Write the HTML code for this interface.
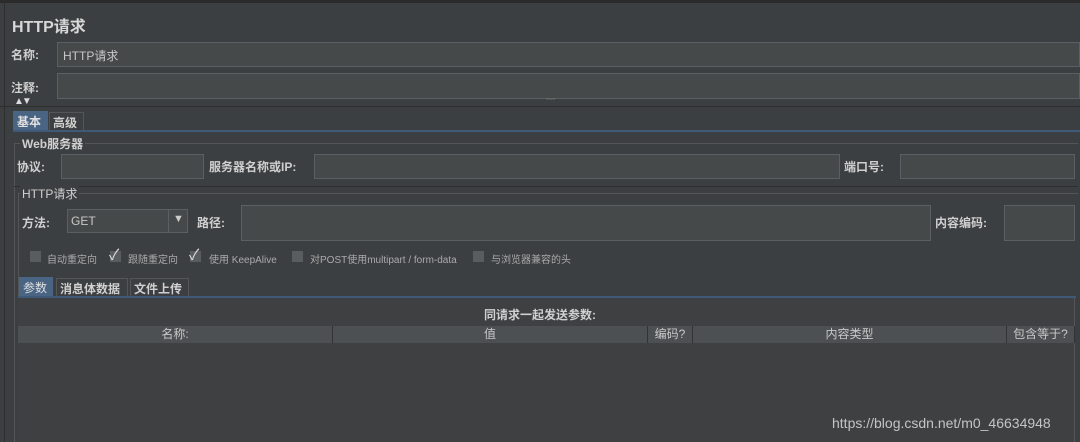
<!DOCTYPE html>
<html><head><meta charset="utf-8"><style>
*{margin:0;padding:0;box-sizing:border-box}
body{width:1080px;height:442px;background:#3c3f41;overflow:hidden;position:relative;font-family:"Liberation Sans","Noto Sans CJK SC",sans-serif;color:#c8c8c8;font-size:12px}
.a{position:absolute;white-space:nowrap}
.in{position:absolute;background:#45494a;border:1px solid #5c5f61}
.lb{position:absolute;font-weight:bold;color:#d0d0d0;font-size:12px;white-space:nowrap}
.cb{position:absolute;width:11px;height:11px;background:#5a5d5f;top:251px}
.ck{position:absolute;top:244px;font-size:15px;color:#ddd}
.cl{position:absolute;top:251px;font-size:10px;color:#aaa;white-space:nowrap}
.tab{position:absolute;height:20px;border:1px solid #555;background:#3c3f41;font-weight:bold;font-size:12px;padding:1px 3px;color:#d0d0d0}
.th{position:absolute;top:326px;height:17px;background:#4c5052;border-right:1px solid #333;text-align:center;font-size:12px;line-height:17px;color:#c8c8c8}
</style></head><body>
<div class="a" style="left:0;top:0;width:1080px;height:3px;background:#2b2b2b"></div>
<div class="a" style="left:4px;top:0;width:1px;height:442px;background:#2e2e2e"></div>
<div class="a" style="left:12px;top:13px;font-size:16px;font-weight:bold;color:#d8d8d8">HTTP请求</div>
<div class="lb" style="left:11px;top:46px">名称:</div>
<div class="in" style="left:57px;top:42px;width:1023px;height:25px"></div>
<div class="a" style="left:63px;top:47px;color:#c8c8c8">HTTP请求</div>
<div class="lb" style="left:11px;top:79px">注释:</div>
<div class="in" style="left:57px;top:73px;width:1023px;height:26px"></div>
<div class="a" style="left:14px;top:96px;font-size:10px;color:#ddd;letter-spacing:-2px">▲▼</div>
<div class="a" style="left:0;top:106px;width:1080px;height:1px;background:#2e2e2e"></div>
<div class="a" style="left:546px;top:99px;font-size:7px;color:#888">ˇˇˇˇ</div>
<div class="tab" style="left:13px;top:111px;width:35px;background:#4a6484;border-color:#4a6484;color:#e0e0e0">基本</div>
<div class="tab" style="left:49px;top:112px;width:35px">高级</div>
<div class="a" style="left:13px;top:130px;width:1067px;height:2px;background:#3f5a78"></div>
<div class="a" style="left:14px;top:143px;width:1064px;height:1px;background:#555"></div>
<div class="a" style="left:14px;top:143px;width:1px;height:299px;background:#555"></div>
<div class="lb" style="left:20px;top:135px;background:#3c3f41;padding:0 2px">Web服务器</div>
<div class="lb" style="left:17px;top:158px">协议:</div>
<div class="in" style="left:61px;top:154px;width:143px;height:25px"></div>
<div class="lb" style="left:209px;top:158px">服务器名称或IP:</div>
<div class="in" style="left:314px;top:154px;width:526px;height:25px"></div>
<div class="lb" style="left:844px;top:158px">端口号:</div>
<div class="in" style="left:900px;top:154px;width:175px;height:25px"></div>
<div class="a" style="left:14px;top:186px;width:1064px;height:1px;background:#2e2e2e"></div>
<div class="a" style="left:18px;top:193px;width:1060px;height:1px;background:#555"></div>
<div class="a" style="left:18px;top:193px;width:1px;height:249px;background:#555"></div>
<div class="lb" style="left:20px;top:185px;background:#3c3f41;padding:0 2px;font-weight:normal">HTTP请求</div>
<div class="lb" style="left:22px;top:214px">方法:</div>
<div class="in" style="left:67px;top:209px;width:121px;height:24px"></div>
<div class="a" style="left:168px;top:209px;width:1px;height:24px;background:#5c5f61"></div>
<div class="a" style="left:71px;top:214px;color:#c8c8c8">GET</div>
<div class="a" style="left:173px;top:213px;font-size:11px;color:#ccc">▼</div>
<div class="lb" style="left:197px;top:214px">路径:</div>
<div class="in" style="left:241px;top:205px;width:690px;height:36px"></div>
<div class="lb" style="left:935px;top:214px">内容编码:</div>
<div class="in" style="left:1004px;top:205px;width:71px;height:36px"></div>
<div class="cb" style="left:30px"></div><div class="cl" style="left:47px">自动重定向</div>
<div class="cb" style="left:110px"></div><div class="ck" style="left:109px">✓</div><div class="cl" style="left:128px">跟随重定向</div>
<div class="cb" style="left:190px"></div><div class="ck" style="left:189px">✓</div><div class="cl" style="left:209px">使用 KeepAlive</div>
<div class="cb" style="left:292px"></div><div class="cl" style="left:310px">对POST使用multipart / form-data</div>
<div class="cb" style="left:473px"></div><div class="cl" style="left:491px">与浏览器兼容的头</div>
<div class="tab" style="left:19px;top:277px;width:34px;background:#4a6484;border-color:#4a6484;color:#e0e0e0;font-weight:normal">参数</div>
<div class="tab" style="left:56px;top:278px;width:72px">消息体数据</div>
<div class="tab" style="left:130px;top:278px;width:59px">文件上传</div>
<div class="a" style="left:18px;top:296px;width:1058px;height:2px;background:#3f5a78"></div>
<div class="a" style="left:18px;top:298px;width:1057px;height:144px;background:#3e4042;border-right:1px solid #555"></div>
<div class="lb" style="left:484px;top:306px">同请求一起发送参数:</div>
<div class="th" style="left:18px;width:315px">名称:</div>
<div class="th" style="left:333px;width:315px">值</div>
<div class="th" style="left:648px;width:45px">编码?</div>
<div class="th" style="left:693px;width:314px">内容类型</div>
<div class="th" style="left:1007px;width:68px">包含等于?</div>
<div class="a" style="left:832px;top:415px;font-size:14px;color:#c4c4c4">https://blog.csdn.net/m0_46634948</div>
</body></html>
